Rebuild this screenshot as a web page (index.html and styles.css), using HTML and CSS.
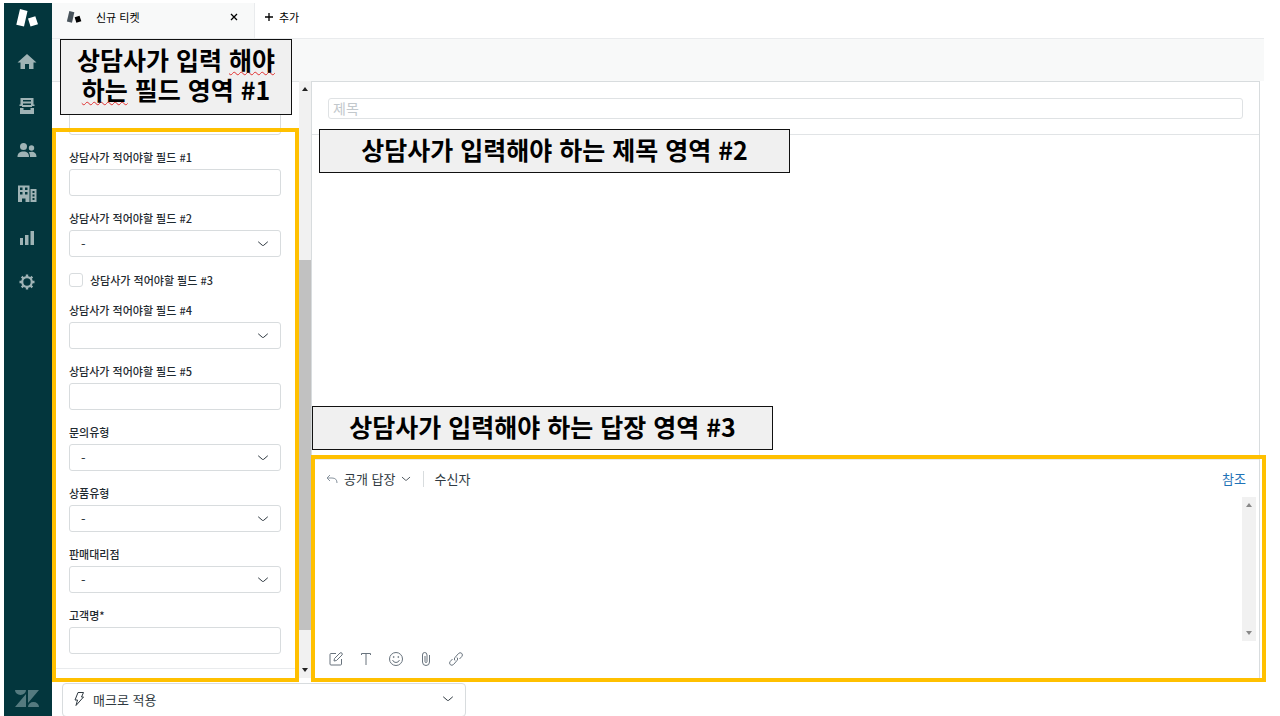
FILE: index.html
```html
<!DOCTYPE html>
<html lang="ko">
<head>
  <meta charset="UTF-8" />
  <title>신규 티켓</title>
  <link rel="stylesheet" href="styles.css">
</head>
<body>
  <svg class="defs" aria-hidden="true">
    <symbol id="chevron" viewBox="0 0 12 12"><path d="M1.5 4 L5.3 7.3 Q6 7.8 6.7 7.3 L10.5 4" fill="none" stroke="currentColor" stroke-linecap="round"/></symbol>
    <symbol id="arrow-up" viewBox="0 0 12 12"><path d="M6 4 L9 8 H3 Z" fill="currentColor"/></symbol>
    <symbol id="arrow-down" viewBox="0 0 12 12"><path d="M6 8 L9 4 H3 Z" fill="currentColor"/></symbol>
  </svg>

  <div class="app">
    <nav class="sidebar">
      <svg class="brand" viewBox="0 0 24 20"><path d="M5 1 L12.500 3 L9 18.500 L1.300 16.700 Z M13 10.500 L20.300 8.300 L23 16.300 L15.500 18.500 Z" fill="#fff"/></svg>
      <a href="#" aria-label="홈"><svg viewBox="0 0 20 20"><path d="M10 2 L19.5 10.5 H16.5 V17 H12 V12 H8 V17 H3.500 V10.5 H.5 Z" fill="currentColor"/></svg></a>
      <a href="#" aria-label="보기"><svg viewBox="0 0 20 20"><path fill-rule="evenodd" d="M3.500 2 H16.500 V8.500 H17.500 V10 H15 V11 H5 V10 H2.500 V8.500 H3.500 Z M6 4 V5.500 H14 V4 Z M6 7.500 V9 H14 V7.500 Z M3 12 H6.500 V14 H13.500 V12 H17 V18 H3 Z" fill="currentColor"/></svg></a>
      <a href="#" aria-label="고객"><svg viewBox="0 0 20 20"><g fill="currentColor"><circle cx="6.500" cy="6.500" r="3.500"/><circle cx="14.500" cy="8" r="2.700"/><path d="M.5 17 C.5 13 3 11.500 6.500 11.500 S12 13 12 17 Z M13 17 C13 15 12.700 13.500 11.800 12.300 C15.500 11 19.500 12 19.500 17 Z"/></g></svg></a>
      <a href="#" aria-label="조직"><svg viewBox="0 0 20 20"><path fill-rule="evenodd" d="M1 1.500 H12.500 V18 H8.500 V14.500 H5 V18 H1 Z M3 3.500 V6 H5.500 V3.500 Z M8 3.500 V6 H10.500 V3.500 Z M3 8 V10.500 H5.500 V8 Z M8 8 V10.500 H10.500 V8 Z M13.500 5 H19.500 V18 H13.500 Z M15.500 7 V9 H17.500 V7 Z M15.500 10.500 V12.500 H17.500 V10.500 Z M15.500 14 V16 H17.500 V14 Z" fill="currentColor"/></svg></a>
      <a href="#" aria-label="보고"><svg viewBox="0 0 20 20"><path d="M3 10 H6 V17 H3 Z M8 7 H11.500 V17 H8 Z M13.500 3 H17 V17 H13.500 Z" fill="currentColor"/></svg></a>
      <a href="#" aria-label="설정"><svg viewBox="0 0 20 20"><g fill="none" stroke="currentColor"><circle cx="10" cy="10" r="4.800" stroke-width="2.200"/><path d="M10 2.500 V5 M10 15 V17.500 M2.500 10 H5 M15 10 H17.500 M4.700 4.700 L6.500 6.500 M13.500 13.500 L15.300 15.300 M15.300 4.700 L13.500 6.500 M6.500 13.500 L4.700 15.300" stroke-width="2.400"/></g></svg></a>
      <svg class="zendesk" viewBox="0 0 24 18"><path d="M0 0 H11 A5.500 5 0 0 1 0 0 Z M11 4 V17 H0 Z M13 0 H24 L13 13 Z M13 17 A5.500 5 0 0 1 24 17 Z" fill="currentColor"/></svg>
    </nav>

    <div class="main">
      <header class="tabs">
        <div class="tab">
          <svg class="tab-icon" viewBox="0 0 24 20"><path d="M5 1 L12.500 3 L9 18.500 L1.300 16.700 Z" fill="#49545c"/><path d="M13 10.500 L20.300 8.300 L23 16.300 L15.500 18.500 Z" fill="#000"/></svg>
          <span class="tab-title">신규 티켓</span>
          <button class="icon-btn" aria-label="닫기"><svg viewBox="0 0 12 12"><path d="M3 3 L9 9 M9 3 L3 9" stroke="currentColor" stroke-width="1.300"/></svg></button>
        </div>
        <button class="add-tab"><svg viewBox="0 0 12 12"><path d="M6 2 V10 M2 6 H10" stroke="currentColor" stroke-width="1.300"/></svg>추가</button>
      </header>
      <div class="toolbar"></div>

      <div class="workspace">
        <form class="fields">
          <div class="field"><input type="text" aria-label="필드"></div>
          <div class="field"><label for="f1">상담사가 적어야할 필드 #1</label><input type="text" id="f1"></div>
          <div class="field"><label for="f2">상담사가 적어야할 필드 #2</label>
            <div class="select"><select id="f2"><option>-</option></select><svg><use href="#chevron"/></svg></div></div>
          <div class="check"><input type="checkbox" id="f3"><label for="f3">상담사가 적어야할 필드 #3</label></div>
          <div class="field"><label for="f4">상담사가 적어야할 필드 #4</label>
            <div class="select"><select id="f4"><option></option></select><svg><use href="#chevron"/></svg></div></div>
          <div class="field"><label for="f5">상담사가 적어야할 필드 #5</label><input type="text" id="f5"></div>
          <div class="field"><label for="f6">문의유형</label>
            <div class="select"><select id="f6"><option>-</option></select><svg><use href="#chevron"/></svg></div></div>
          <div class="field"><label for="f7">상품유형</label>
            <div class="select"><select id="f7"><option>-</option></select><svg><use href="#chevron"/></svg></div></div>
          <div class="field"><label for="f8">판매대리점</label>
            <div class="select"><select id="f8"><option>-</option></select><svg><use href="#chevron"/></svg></div></div>
          <div class="field"><label for="f9">고객명*</label><input type="text" id="f9"></div>
          <hr>
          <div class="frame frame-fields"></div>
          <div class="note note-fields">상담사가 입력 <span class="typo">해야</span><br><span class="typo">하는</span> 필드 영역 #1</div>
        </form>

        <div class="scrollbar">
          <svg><use href="#arrow-up"/></svg>
          <div class="track"><div class="thumb"></div></div>
          <svg><use href="#arrow-down"/></svg>
        </div>

        <section class="conversation">
          <div class="subject"><input type="text" placeholder="제목" aria-label="제목"></div>
          <div class="thread">
            <div class="note note-subject">상담사가 입력해야 하는 제목 영역 #2</div>
            <div class="note note-reply">상담사가 입력해야 하는 답장 영역 #3</div>
          </div>
          <div class="composer">
            <div class="composer-head">
              <button class="channel">
                <svg viewBox="0 0 12 12"><path d="M4 2 L1 5 L4 8 M1 5 H6 Q11 5 11 10" fill="none" stroke="#87929d"/></svg>
                공개 답장
                <svg class="caret"><use href="#chevron"/></svg>
              </button>
              <span class="to">수신자</span>
              <a class="cc" href="#">참조</a>
            </div>
            <div class="editor">
              <textarea aria-label="답장"></textarea>
              <div class="scrollbar scrollbar-editor">
                <svg><use href="#arrow-up"/></svg>
                <div class="track"></div>
                <svg><use href="#arrow-down"/></svg>
              </div>
            </div>
            <div class="composer-tools">
              <button class="icon-btn" aria-label="작성"><svg viewBox="0 0 16 16"><path d="M8 2.500 H3 Q2 2.500 2 3.500 V13 Q2 14 3 14 H12.500 Q13.500 14 13.500 13 V8 M6 10 L6.500 7.500 L12 2 Q13 1.300 14 2.200 Q14.800 3 14 4 L8.500 9.500 Z"/></svg></button>
              <button class="icon-btn" aria-label="서식"><svg viewBox="0 0 16 16"><path d="M3.500 4 V2.500 H12.500 V4 M8 2.500 V14"/></svg></button>
              <button class="icon-btn" aria-label="이모지"><svg viewBox="0 0 16 16"><circle cx="8" cy="8" r="6.500"/><path d="M4.500 9 Q5.500 11.500 8 11.500 T11.500 9"/><circle cx="5.700" cy="6" r=".5"/><circle cx="10.300" cy="6" r=".5"/></svg></button>
              <button class="icon-btn" aria-label="첨부"><svg viewBox="0 0 16 16"><path d="M7 5 V10.500 Q7 11.500 8 11.500 T9 10.500 V4 Q9 1.500 6.700 1.500 T4.500 4 V11 Q4.500 14.500 8 14.500 T11.500 11 V4"/></svg></button>
              <button class="icon-btn" aria-label="링크"><svg viewBox="0 0 16 16"><path d="M7 9.500 Q5.500 8 7 6.500 L10.500 2.500 Q12 1 13.700 2.300 Q15.200 4 13.800 5.500 L11.500 8 M9 6.500 Q10.500 8 9 9.500 L5.500 13.500 Q4 15 2.300 13.700 Q.8 12 2.200 10.500 L4.500 8"/></svg></button>
            </div>
            <div class="frame frame-composer"></div>
          </div>
        </section>
      </div>

      <footer class="footer">
        <button class="macro">
          <svg class="bolt" viewBox="0 0 12 16"><path d="M5 1.500 H10.500 L8.500 6 H10.500 L3 14.500 L4.500 9 H2 Z" fill="none" stroke="currentColor" stroke-linejoin="round"/></svg>
          <span>매크로 적용</span>
          <svg><use href="#chevron"/></svg>
        </button>
      </footer>
    </div>
  </div>
</body>
</html>
```

FILE: styles.css
```css
* {
  box-sizing: border-box;
}
body {
  margin: 0;
  background: #fff;
  color: #2f3941;
  font-family: "Noto Sans CJK KR", sans-serif;
  font-size: 13px;
}
button, input, select, textarea {
  font: inherit;
  color: inherit;
}
button {
  border: 0;
  padding: 0;
  background: none;
}
svg {
  width: 12px;
  height: 12px;
  flex: none;
}
.defs {
  display: none;
}
.app {
  display: flex;
  height: 100vh;
  padding: 3px 16px 0 4px;
  overflow: hidden;
}

/* sidebar */
.sidebar {
  display: flex;
  flex-direction: column;
  align-items: center;
  gap: 24px;
  width: 48px;
  padding: 5px 2px 8px 0;
  background: #03363d;
  color: #9fb3b5;
}
.sidebar a {
  height: 20px;
  color: inherit;
}
.sidebar a svg {
  display: block;
  width: 20px;
  height: 20px;
}
.sidebar .brand {
  width: 24px;
  height: 20px;
}
.sidebar .zendesk {
  width: 24px;
  height: 18px;
  margin-top: auto;
  color: #557a7f;
}

/* tabs */
.main {
  display: flex;
  flex-direction: column;
  flex: 1;
  min-width: 0;
}
.tabs {
  display: flex;
  height: 35px;
  font-size: 11px;
  color: #000;
}
.tab {
  display: flex;
  align-items: center;
  width: 203px;
  padding: 0 14px 8px;
  background: #f8f9f9;
  border-right: 1px solid #e9ebed;
}
.tab-icon {
  width: 16px;
  height: 14px;
}
.tab-title {
  flex: 1;
  margin-left: 14px;
}
.icon-btn {
  display: flex;
}
.add-tab {
  display: flex;
  align-items: center;
  gap: 4px;
  padding: 0 8px 8px;
}
.toolbar {
  height: 43px;
  background: #f8f9f9;
  border-top: 1px solid #e9ebed;
}

/* ticket fields */
.workspace {
  display: flex;
  flex: 1;
  min-height: 0;
}
.fields {
  position: relative;
  display: flex;
  flex-direction: column;
  gap: 14px;
  width: 247px;
  padding-top: 26px;
  border-top: 1px solid #e1e4e6;
}
.field {
  display: flex;
  flex-direction: column;
  gap: 4px;
  padding: 0 18px 0 17px;
}
.fields label {
  font-size: 11px;
  line-height: 16px;
  font-weight: 500;
  color: #1f2a30;
}
.field input, .field select {
  width: 100%;
  height: 27px;
  padding: 0 11px;
  border: 1px solid #d8dcde;
  border-radius: 3px;
  background: #fff;
}
.select {
  display: grid;
  align-items: center;
}
.select select {
  grid-area: 1 / 1;
  appearance: none;
}
.select svg {
  grid-area: 1 / 1;
  justify-self: end;
  margin-right: 12px;
  pointer-events: none;
}
.check {
  display: flex;
  align-items: center;
  gap: 7px;
  height: 17px;
  padding-left: 17px;
}
.check input {
  appearance: none;
  width: 14px;
  height: 14px;
  margin: 0;
  border: 1px solid #d8dcde;
  border-radius: 3px;
}
.fields hr {
  width: 100%;
  margin: 0;
  border: 0;
  border-top: 1px solid #e9ebed;
}

/* scrollbars */
.scrollbar {
  display: flex;
  flex-direction: column;
  width: 12px;
  padding: 2px 0;
  background: #f1f1f1;
  color: #222;
}
.track {
  flex: 1;
}
.thumb {
  height: 65%;
  margin-top: 165px;
  background: #c1c1c1;
}
.scrollbar-editor {
  width: 14px;
  align-items: center;
  color: #888;
}

/* conversation */
.conversation {
  display: flex;
  flex-direction: column;
  flex: 1;
  margin-right: 4px;
  border: 1px solid #d8dcde;
  border-bottom: 0;
}
.subject {
  display: flex;
  height: 53px;
  padding: 16px 16px 0;
  border-bottom: 1px solid #e1e4e6;
}
.subject input {
  flex: 1;
  height: 21px;
  padding: 0 4px 2px;
  border: 1px solid #dfe2e4;
  border-radius: 3px;
  font-size: 14px;
}
.subject input::placeholder {
  color: #c2c8cc;
}
.thread {
  position: relative;
  flex: 1;
}
.composer {
  position: relative;
  display: flex;
  flex-direction: column;
  height: 219px;
  border-top: 1px solid #e9ebed;
}
.composer-head {
  display: flex;
  align-items: center;
  height: 37px;
  padding: 0 13px 0 14px;
}
.channel {
  display: flex;
  align-items: center;
  gap: 6px;
  padding-right: 12px;
  border-right: 1px solid #d8dcde;
  line-height: 16px;
}
.caret {
  width: 10px;
  height: 10px;
}
.to {
  margin-left: 10px;
}
.cc {
  margin-left: auto;
  color: #1f73b7;
  text-decoration: none;
}
.editor {
  display: flex;
  height: 144px;
  padding-right: 3px;
}
.editor textarea {
  flex: 1;
  border: 0;
  resize: none;
}
.composer-tools {
  display: flex;
  align-items: center;
  gap: 14px;
  flex: 1;
  padding: 0 0 2px 16px;
}
.composer-tools svg {
  width: 16px;
  height: 16px;
  fill: none;
  stroke: #68737d;
}

/* footer */
.footer {
  height: 38px;
  padding: 5px 0 0 10px;
}
.macro {
  display: flex;
  align-items: center;
  gap: 8px;
  width: 404px;
  height: 34px;
  padding: 0 11px 2px 10px;
  border: 1px solid #d8dcde;
  border-radius: 4px;
}
.macro span {
  flex: 1;
  text-align: left;
}
.bolt {
  height: 16px;
}

/* annotations lying over the screen */
.frame {
  position: absolute;
  border: 4px solid #ffc000;
  pointer-events: none;
}
.frame-fields {
  inset: 46px 0 -4px 0;
}
.frame-composer {
  inset: -5px -7px -4px -1px;
}
.note {
  position: absolute;
  z-index: 1;
  padding: 0 16px 4px;
  border: 1px solid #111;
  background: #f0f0f0;
  color: #000;
  font-size: 25px;
  font-weight: 700;
  line-height: 38px;
  text-align: center;
  white-space: nowrap;
}
.note-fields {
  top: -43px;
  left: 8px;
  width: 232px;
  padding: 4px 0 10px;
  line-height: 30px;
}
.note-subject {
  top: -6px;
  left: 7px;
  width: 471px;
}
.note-reply {
  bottom: 9px;
  left: 0;
  width: 461px;
}
.typo {
  text-decoration: underline wavy #e03030 1px;
  text-decoration-skip-ink: none;
}
```
